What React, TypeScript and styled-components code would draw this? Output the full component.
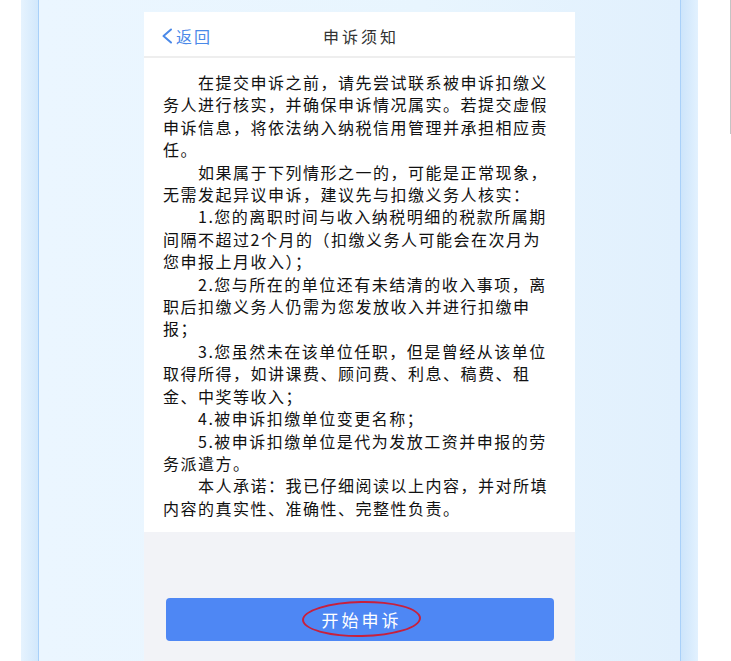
import React from "react";
import styled, { createGlobalStyle } from "styled-components";

const GlobalStyle = createGlobalStyle`
  html, body {
    margin: 0;
    padding: 0;
    height: 100%;
    overflow: hidden;
    background: #ffffff;
  }
  body {
    font-family: "Noto Sans CJK SC", "Noto Sans", sans-serif;
  }
  #root {
    height: 100%;
  }
`;

const Page = styled.div`
  display: flex;
  height: 100vh;
  padding-left: 21px;
  box-sizing: border-box;
`;

const Frame = styled.div`
  width: 677px;
  height: 100%;
  padding: 0 17px;
  box-sizing: border-box;
  display: flex;
  flex-shrink: 0;
  background: linear-gradient(
    to right,
    #e6f3fe 0px,
    #d2e8fc 17px,
    transparent 17px,
    transparent calc(100% - 17px),
    #cde5fb calc(100% - 17px),
    #e2f1fe 100%
  );
`;

const Panel = styled.div`
  flex: 1;
  display: flex;
  justify-content: center;
  overflow: hidden;
  border-left: 1px solid #a8d0f9;
  border-right: 1px solid #a8d0f9;
  background: linear-gradient(to right, #ebf6ff 0%, #e8f5fe 60%, #e1f0fd 100%);
`;

const Spacer = styled.div`
  flex: 1;
`;

const EdgeLine = styled.div`
  width: 1px;
  height: 134px;
  background: #c4c4c4;
`;

const Phone = styled.div`
  width: 431px;
  margin-top: 12px;
  display: flex;
  flex-direction: column;
  flex-shrink: 0;
  background: #f2f3f7;
  & > * {
    flex-shrink: 0;
  }
`;

const Header = styled.header`
  height: 46px;
  padding-top: 3px;
  box-sizing: border-box;
  display: grid;
  grid-template-columns: 1fr auto 1fr;
  align-items: center;
  background: #ffffff;
  border-bottom: 2px solid #eeeeee;
`;

const Back = styled.div`
  display: flex;
  align-items: center;
  gap: 3px;
  padding-left: 17px;
  color: #4a89e8;
  font-size: 16px;
  letter-spacing: 2px;
`;

const Title = styled.div`
  font-size: 16px;
  letter-spacing: 3px;
  padding-left: 3px;
  color: #333333;
`;

const Content = styled.div`
  background: #ffffff;
  padding: 13px 22px 13px 19px;
`;

const Para = styled.p`
  margin: 0;
  font-size: 16px;
  line-height: 22.4px;
  letter-spacing: 1.5px;
  text-indent: 35px;
  color: #111111;
`;

const Footer = styled.div`
  padding: 66px 21px 30px 22px;
`;

const Button = styled.button`
  position: relative;
  width: 100%;
  height: 43px;
  border: none;
  border-radius: 4px;
  background: #4e87f4;
  color: #ffffff;
  font-family: "Noto Sans CJK SC", sans-serif;
  font-size: 17px;
  letter-spacing: 3px;
  padding: 0 0 0 3px;
  display: flex;
  align-items: center;
  justify-content: center;
`;

const Circle = styled.span`
  position: absolute;
  left: 136px;
  top: 3px;
  width: 119px;
  height: 36px;
  box-sizing: border-box;
  border: 2px solid #c8203c;
  border-radius: 50%;
  transform: rotate(-1deg);
  pointer-events: none;
`;

const paragraphs = [
  "在提交申诉之前，请先尝试联系被申诉扣缴义务人进行核实，并确保申诉情况属实。若提交虚假申诉信息，将依法纳入纳税信用管理并承担相应责任。",
  "如果属于下列情形之一的，可能是正常现象，无需发起异议申诉，建议先与扣缴义务人核实：",
  "1.您的离职时间与收入纳税明细的税款所属期间隔不超过2个月的（扣缴义务人可能会在次月为您申报上月收入）；",
  "2.您与所在的单位还有未结清的收入事项，离职后扣缴义务人仍需为您发放收入并进行扣缴申报；",
  "3.您虽然未在该单位任职，但是曾经从该单位取得所得，如讲课费、顾问费、利息、稿费、租金、中奖等收入；",
  "4.被申诉扣缴单位变更名称；",
  "5.被申诉扣缴单位是代为发放工资并申报的劳务派遣方。",
  "本人承诺：我已仔细阅读以上内容，并对所填内容的真实性、准确性、完整性负责。",
];

export default function App() {
  return (
    <>
      <GlobalStyle />
      <Page>
        <Frame>
          <Panel>
            <Phone>
              <Header>
                <Back>
                  <svg width="12" height="16" viewBox="0 0 12 16" fill="none">
                    <polyline
                      points="10,1.5 2.5,8 10,14.5"
                      stroke="#4a89e8"
                      strokeWidth="2"
                      strokeLinecap="round"
                      strokeLinejoin="round"
                    />
                  </svg>
                  <span>返回</span>
                </Back>
                <Title>申诉须知</Title>
                <div />
              </Header>
              <Content>
                {paragraphs.map((p, i) => (
                  <Para key={i}>{p}</Para>
                ))}
              </Content>
              <Footer>
                <Button>
                  开始申诉
                  <Circle />
                </Button>
              </Footer>
            </Phone>
          </Panel>
        </Frame>
        <Spacer />
        <EdgeLine />
      </Page>
    </>
  );
}
